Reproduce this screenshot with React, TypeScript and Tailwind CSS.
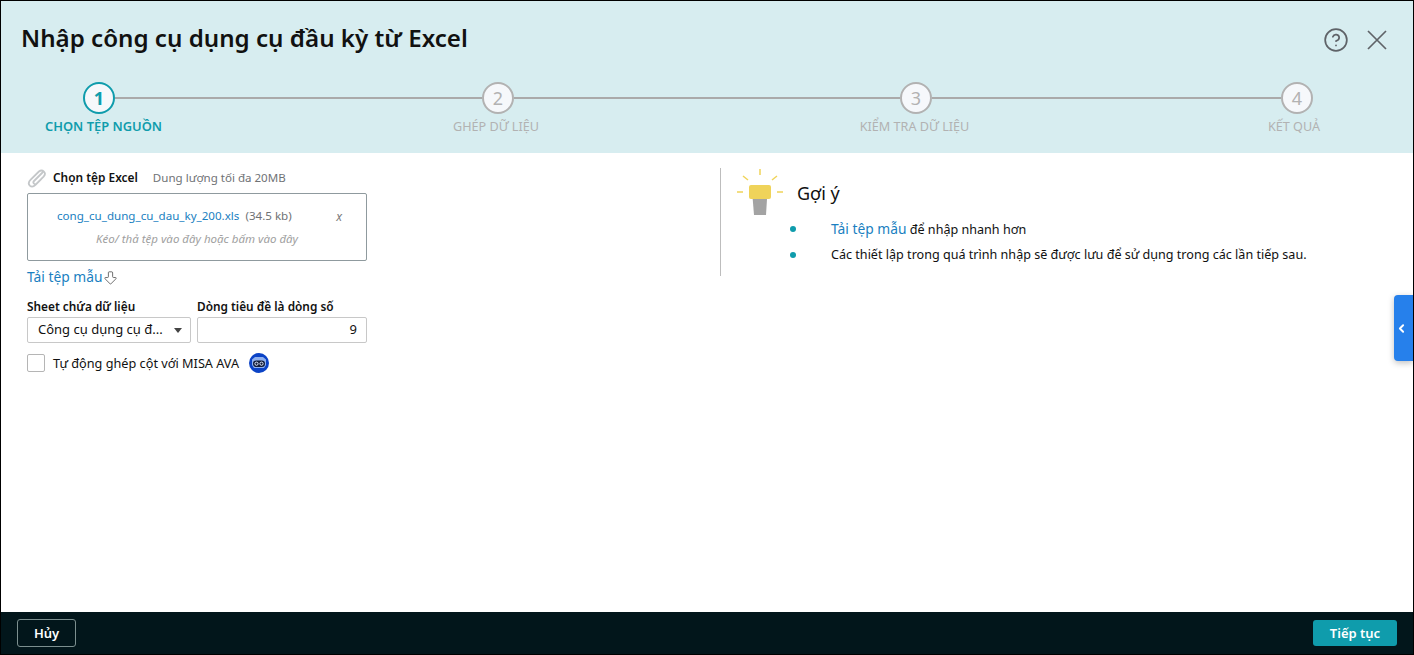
import { ArrowBigDown, ChevronLeft, CircleHelp } from "lucide-react"

const steps = [
  { n: 1, label: "CHỌN TỆP NGUỒN", active: true, line: "w-[367px]", shift: "ml-[9px]" },
  { n: 2, label: "GHÉP DỮ LIỆU", active: false, line: "w-[386px]", shift: "mr-[4px]" },
  { n: 3, label: "KIỂM TRA DỮ LIỆU", active: false, line: "w-[349px]", shift: "mr-[3px]" },
  { n: 4, label: "KẾT QUẢ", active: false, line: "", shift: "mr-[6px]" },
]

function Paperclip() {
  return (
    <svg width="20" height="20" viewBox="0 0 20 20" fill="none" stroke="#c4c7c9" strokeWidth="1.8" strokeLinecap="round" className="shrink-0">
      <path d="M15.5 4.500 7 13c-1 1-.6 2 0 2.600.7.600 1.700.800 2.600 0l7-7c1.800-1.900 1.500-3.800.3-5-1.300-1.300-3.200-1.500-5-.1L3.700 11.700C1 14.400 1.700 16.500 2.800 17.600c1.200 1.100 3.300 1.600 5.700-.7l5.500-5.500" />
    </svg>
  )
}

function Bulb() {
  return (
    <svg width="46" height="48" viewBox="0 0 46 48" className="shrink-0">
      <path d="M23 1v6M6 8l5 4M40 8l-5 4M0 24h6M40 24h6" stroke="#f0d45a" strokeWidth="1.500" fill="none" />
      <rect x="12" y="17" width="22" height="14" rx="2" fill="#efd35a" />
      <path d="M15.700 31h14.300l-1 16h-12z" fill="#a3a3a3" />
    </svg>
  )
}

function Ava() {
  return (
    <svg width="20" height="20" viewBox="0 0 20 20" className="shrink-0">
      <circle cx="10" cy="10" r="10" fill="#0b43c6" />
      <path d="M3 6.500 6 4h8l3 2.500V12l-2 3H5l-2-3z" fill="#8fb0ee" />
      <rect x="4" y="7.500" width="12" height="6.500" rx="3.200" fill="#111c3a" />
      <circle cx="7.500" cy="10.700" r="1.600" fill="none" stroke="#dfe8fb" strokeWidth="1" />
      <circle cx="12.500" cy="10.700" r="1.600" fill="none" stroke="#dfe8fb" strokeWidth="1" />
    </svg>
  )
}

export default function App() {
  return (
    <div className="relative flex h-[655px] w-[1414px] flex-col overflow-hidden border border-black bg-white font-['Noto_Sans',sans-serif] text-[13px] text-[#111]">
      <header className="h-[152px] shrink-0 bg-[#d7edf0]">
        <div className="flex h-[76px] items-start justify-between pl-5 pr-[26px] pt-[19px]">
          <h1 className="text-[24.150px] font-semibold leading-[36px] text-[#111]">Nhập công cụ dụng cụ đầu kỳ từ Excel</h1>
          <div className="flex items-center gap-[18px] pt-[7px] text-[#5f6368]">
            <CircleHelp size={26} strokeWidth={1.600} />
            <svg width="20" height="20" viewBox="0 0 20 20" fill="none" stroke="currentColor" strokeWidth="1.700">
              <path d="M1 1l18 18M19 1 1 19" />
            </svg>
          </div>
        </div>
        <div className="flex pl-[82px] pt-[5px]">
          {steps.map((s) => (
            <div key={s.n} className="flex items-start">
              <div className="flex w-[32px] flex-col items-center">
                <div
                  className={
                    s.active
                      ? "flex h-[32px] w-[32px] items-center justify-center rounded-full border-2 border-[#0f9cac] bg-[#f6f8fb] text-[18px] font-bold text-[#0f9cac]"
                      : "flex h-[32px] w-[32px] items-center justify-center rounded-full border-2 border-[#b2b2b2] bg-[#f6f8fb] text-[18px] text-[#b2b2b2]"
                  }
                >
                  {s.n}
                </div>
                <span
                  className={
                    s.active
                      ? `mt-[3px] whitespace-nowrap text-[12.900px] font-semibold leading-[18px] text-[#0f9cac] ${s.shift}`
                      : `mt-[3px] whitespace-nowrap text-[12.650px] leading-[18px] text-[#b2b2b2] ${s.shift}`
                  }
                >
                  {s.label}
                </span>
              </div>
              {s.line && <div className={`mt-[15px] h-[2px] bg-[#aaaaaa] ${s.line}`} />}
            </div>
          ))}
        </div>
      </header>

      <main className="flex flex-1 pl-[26px] pt-[15px]">
        <section className="w-[340px] shrink-0">
          <div className="flex h-[20px] items-center gap-[6px] text-[12px]">
            <Paperclip />
            <span className="text-[11.900px] font-semibold text-[#111]">Chọn tệp Excel</span>
            <span className="ml-[9px] text-[11.550px] text-[#6f7275]">Dung lượng tối đa 20MB</span>
          </div>
          <div className="relative mt-[5px] flex h-[68px] flex-col items-center rounded-[2px] border border-[#8f9a9e] pt-[12px] text-[11.600px]">
            <div className="flex w-full pl-[29px] leading-[20px]">
              <span className="text-[#1a7fc1]">cong_cu_dung_cu_dau_ky_200.xls</span>
              <span className="ml-[6px] text-[#6f7275]">(34.5 kb)</span>
            </div>
            <span className="absolute right-[24px] top-[14px] text-[12px] italic text-[#7b7b7b]">x</span>
            <span className="mt-[3px] text-[11.500px] italic leading-[20px] text-[#a0a0a0]">Kéo/ thả tệp vào đây hoặc bấm vào đây</span>
          </div>
          <div className="mt-[3px] flex h-[26px] items-center text-[13.800px] text-[#1a7fc1]">
            Tải tệp mẫu
            <ArrowBigDown size={17} strokeWidth={1.200} className="text-[#555]" />
          </div>
          <div className="mt-[7px] flex gap-[6px]">
            <div className="w-[164px]">
              <div className="text-[11.850px] font-semibold leading-[18px]">Sheet chứa dữ liệu</div>
              <div className="mt-[2px] flex h-[26px] items-center justify-between rounded-[2px] border border-[#c8c8c8] pl-[10px] pr-[8px]">
                <span>Công cụ dụng cụ đ...</span>
                <span className="h-0 w-0 border-x-[4px] border-t-[5px] border-x-transparent border-t-[#444]" />
              </div>
            </div>
            <div className="w-[170px]">
              <div className="text-[11.850px] font-semibold leading-[18px]">Dòng tiêu đề là dòng số</div>
              <div className="mt-[2px] flex h-[26px] items-center justify-end rounded-[2px] border border-[#c8c8c8] pr-[9px]">9</div>
            </div>
          </div>
          <div className="mt-[10px] flex h-[20px] items-center">
            <span className="h-[18px] w-[18px] rounded-[2px] border border-[#b5b5b5]" />
            <span className="ml-[8px] pt-[1px] text-[12.700px]">Tự động ghép cột với MISA AVA</span>
            <span className="ml-[10px]"><Ava /></span>
          </div>
        </section>

        <section className="ml-[353px] flex h-[108px] border-l border-[#bdbdbd] pl-[16px]">
          <div className="w-full">
            <div className="flex items-start">
              <Bulb />
              <span className="ml-[14px] mt-[11px] text-[18px] leading-[28px] text-[#111]">Gợi ý</span>
            </div>
            <ul className="ml-[53px] mt-[3px] space-y-[6px] text-[12.580px]">
              <li className="flex h-[20px] items-center">
                <span className="h-[6px] w-[6px] rounded-full bg-[#0f9cac]" />
                <span className="ml-[35px]"><span className="text-[13.800px] text-[#1a7fc1]">Tải tệp mẫu</span> để nhập nhanh hơn</span>
              </li>
              <li className="flex h-[20px] items-center">
                <span className="h-[6px] w-[6px] rounded-full bg-[#0f9cac]" />
                <span className="ml-[35px]">Các thiết lập trong quá trình nhập sẽ được lưu để sử dụng trong các lần tiếp sau.</span>
              </li>
            </ul>
          </div>
        </section>
      </main>

      <div className="absolute right-0 top-[294px] flex h-[66px] w-[19px] items-center justify-center rounded-l-[4px] bg-[#2680eb] pr-[4px] text-white shadow-[0_2px_6px_rgba(0,0,0,0.25)]">
        <ChevronLeft size={13} strokeWidth={3.500} />
      </div>

      <footer className="flex h-[42px] shrink-0 items-center justify-between bg-[#02161b] pl-4 pr-4">
        <button type="button" className="h-[28px] w-[59px] rounded-[3px] border border-[#7c8f8f] pt-[1px] text-[13px] font-semibold text-white">Hủy</button>
        <button type="button" className="h-[26px] w-[84px] rounded-[3px] bg-[#0f9cac] pt-[1px] text-[13px] font-semibold text-white">Tiếp tục</button>
      </footer>
    </div>
  )
}
